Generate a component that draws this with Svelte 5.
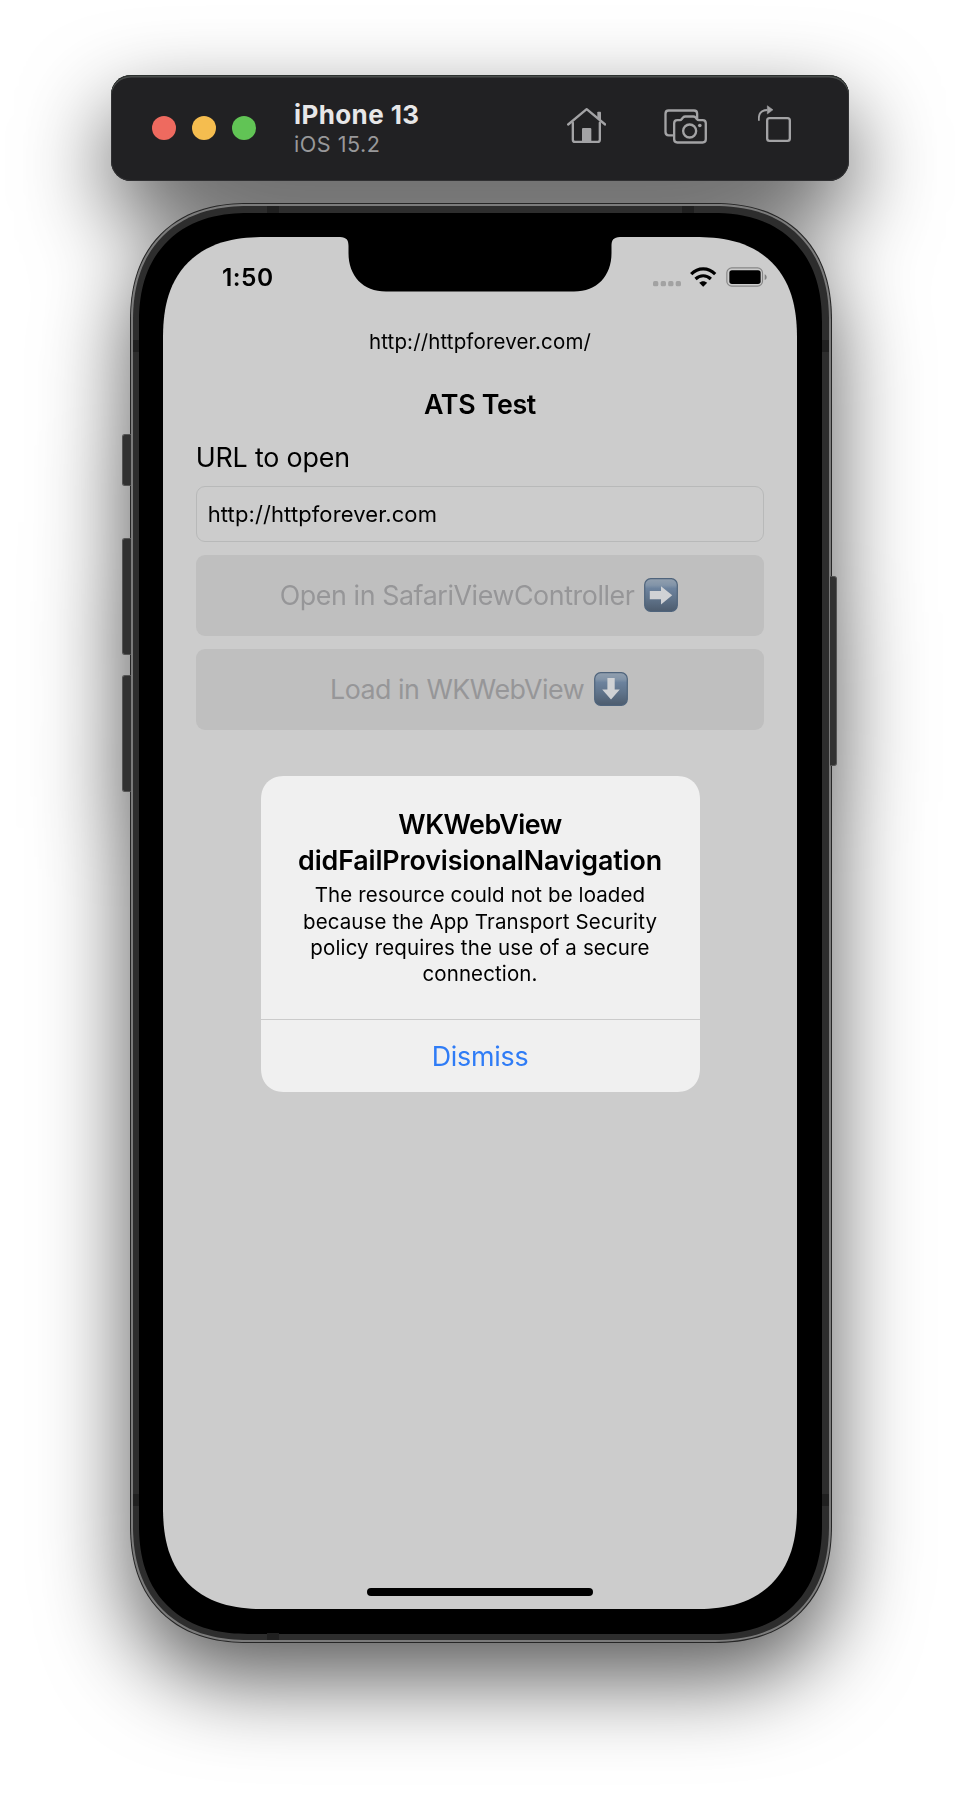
<script>
  const device = { name: 'iPhone 13', os: 'iOS 15.2' };
  const url = 'http://httpforever.com';
</script>

<div class="stage">
  <header class="toolbar">
    <div class="lights"><i class="red"></i><i class="yellow"></i><i class="green"></i></div>
    <div class="device">
      <div class="name">{device.name}</div>
      <div class="os">{device.os}</div>
    </div>
    <div class="tools">
      <svg width="39.5" height="40" viewBox="198 135 118.5 120" fill="none" stroke="#a3a3a5" stroke-width="7" stroke-linecap="round" stroke-linejoin="round">
        <path d="M201.500 193.500 257 147.500 312.500 193.500" />
        <path d="M215.500 188V239Q215.500 245.500 222 245.500H290Q296.500 245.500 296.500 239V188" />
        <path d="M289 157Q289 155 291 155H298Q300 155 300 157V182L289 173Z" fill="#a3a3a5" stroke="none" />
        <path d="M243 207Q243 204 246 204H268Q271 204 271 207V246H243Z" fill="#a3a3a5" stroke="none" />
      </svg>
      <svg class="camera" width="43.3" height="40" viewBox="491 135 130 120" fill="none" stroke="#a3a3a5" stroke-width="7" stroke-linecap="butt" stroke-linejoin="round">
        <path d="M519 226H505Q495.500 226 495.500 216V161Q495.500 151.500 505 151.500H581Q590.500 151.500 590.500 161V176" />
        <path d="M531 180.500H539Q542 180.500 544 177.500L548 172.500Q551 169.500 555 169.500H579Q583 169.500 586 172.500L590 177.500Q592 180.500 596 180.500H607Q616.500 180.500 616.500 190V238Q616.500 247.500 607 247.500H531Q521.500 247.500 521.500 238V190Q521.500 180.500 531 180.500Z" />
        <circle cx="568" cy="213" r="19.500" />
        <circle cx="598.500" cy="196.500" r="5.500" fill="#a3a3a5" stroke="none" />
      </svg>
      <svg class="rotate" width="33.5" height="40" viewBox="774 135 100.500 120" fill="none" stroke="#a3a3a5" stroke-width="7" stroke-linejoin="round">
        <rect x="801.500" y="174.500" width="68" height="68" rx="7" />
        <path d="M776.500 182V175C776.500 158 786 150 802 150" stroke-width="5.500" />
        <path d="M802 137 819 149.500 802 162Z" fill="#a3a3a5" stroke-width="1.500" />
      </svg>
    </div>
  </header>

  <div class="phone">
    <span class="key mute"></span>
    <span class="key up"></span>
    <span class="key down"></span>
    <span class="key power"></span>
    <div class="band">
      <b class="seam t l"></b><b class="seam t r"></b>
      <b class="seam lt"></b><b class="seam rt"></b>
      <b class="seam lb"></b><b class="seam rb"></b>
      <b class="seam bt"></b>
      <div class="bezel">
        <main class="screen">
          <svg class="notch" width="280" height="55" viewBox="0 0 280 55">
            <path d="M0 0C6.500 .3 8.500 3 8.500 9V16C8.500 39 23 54.500 46 54.500H234C257 54.500 271.500 39 271.500 16V9C271.500 3 273.500 .3 280 0Z" fill="#000" />
          </svg>
          <div class="status">
            <span class="time">1:50</span>
            <div class="signals">
              <svg width="28" height="20" viewBox="283 231 84 60" fill="#a2a2a2">
                <rect x="283" y="273" width="16" height="16" rx="5" />
                <rect x="306" y="273" width="16" height="16" rx="5" />
                <rect x="328.500" y="273" width="16" height="16" rx="5" />
                <rect x="351" y="273" width="16" height="16" rx="5" />
              </svg>
              <svg width="26.400" height="20" viewBox="393 230 79 60" fill="none" stroke="#000" stroke-width="9.500">
                <path d="M396.500 251.500C417 230.500 448 230.500 468.500 251.500" />
                <path d="M409.500 266C423 253 442 253 455.500 266" />
                <path d="M420.500 277.500C427.500 271 437.500 271 444.500 277.500L433.500 288.500Q432.500 289.500 431.500 288.500Z" fill="#000" stroke="none" />
              </svg>
              <svg width="41" height="20" viewBox="499 231 123 60">
                <rect x="501.500" y="233.500" width="107" height="55" rx="15" fill="none" stroke="#858585" stroke-width="3.500" />
                <rect x="509" y="240.500" width="94" height="41.500" rx="8" />
                <path d="M615 253C623 256 623 267 615 270Z" fill="#808080" />
              </svg>
            </div>
          </div>

          <p class="current">{url}/</p>
          <h1>ATS Test</h1>
          <label for="target">URL to open</label>
          <div class="field" id="target">{url}</div>

          <button class="action">
            <span class="open">Open in SafariViewController</span>
            <svg width="34" height="34" viewBox="0 0 34 34">
              <defs>
                <linearGradient id="tile" x1="0" y1="0" x2="0" y2="1">
                  <stop offset="0" stop-color="#92a0af" />
                  <stop offset=".2" stop-color="#8294a8" />
                  <stop offset=".3" stop-color="#6c829d" />
                  <stop offset=".6" stop-color="#60748b" />
                  <stop offset="1" stop-color="#4d5c6e" />
                </linearGradient>
              </defs>
              <rect x=".7" y=".7" width="32.600" height="32.600" rx="6" fill="url(#tile)" stroke="#4f647c" stroke-width="1.200" />
              <path d="M5.800 13H17V8.200L28.200 17.200 17 26.500V21.300H5.800Z" fill="#d0d2d5" />
            </svg>
          </button>
          <button class="action second">
            <span class="load">Load in WKWebView</span>
            <svg width="34" height="34" viewBox="0 0 34 34">
              <rect x=".7" y=".7" width="32.600" height="32.600" rx="6" fill="url(#tile)" stroke="#4f647c" stroke-width="1.200" />
              <path d="M13.400 6V17.500H8.200L17 27.500 25.800 17.500H20.700V6Z" fill="#d0d2d5" />
            </svg>
          </button>

          <div class="alert" role="alertdialog">
            <div class="message">
              <h2><span class="view">WKWebView</span><br />didFailProvisionalNavigation</h2>
              <p>The resource could not be loaded<br />because the App Transport Security<br /><span class="policy">policy requires the use of a secure</span><br />connection.</p>
            </div>
            <button class="dismiss">Dismiss</button>
          </div>
          <div class="home"></div>
        </main>
      </div>
    </div>
  </div>
</div>

<style>
  :global(body) { background: #fff; }
  .stage {
    box-sizing: border-box;
    width: 960px;
    height: 1794px;
    padding-top: 75px;
    display: flex;
    flex-direction: column;
    align-items: center;
    font-family: Inter, "Liberation Sans", sans-serif;
    filter: drop-shadow(0 36px 44px rgba(0, 0, 0, .65));
    overflow: hidden;
  }
  p, h1, h2 { margin: 0; }
  button { border: 0; font: inherit; padding: 0; }
  svg { display: block; flex: none; }

  .toolbar {
    box-sizing: border-box;
    width: 738px;
    height: 106px;
    flex: none;
    display: flex;
    align-items: center;
    padding: 0 57.5px 0 41px;
    border-radius: 20px;
    background: #212123;
    box-shadow: inset 0 1px 0 #2b302e, inset 0 2.500px 0 #4a4d4c, inset 0 0 0 1px #303032;
  }
  .lights { display: flex; gap: 16px; }
  .lights i { width: 24px; height: 24px; border-radius: 50%; }
  .red { background: #ee6a5f; }
  .yellow { background: #f5bd4f; }
  .green { background: #61c455; }
  .device { margin-left: 38px; }
  .name { font-size: 26px; line-height: 30px; font-weight: 700; letter-spacing: .4px; color: #e7e7e8; }
  .os { margin-top: 2.600px; font-size: 21.600px; line-height: 24px; letter-spacing: .5px; color: #98989a; }
  .tools { margin-left: auto; display: flex; margin-top: -6px; }
  .camera { margin-left: 57.700px; }
  .rotate { margin-left: 51px; }

  .phone {
    position: relative;
    box-sizing: border-box;
    width: 702px;
    height: 1440px;
    flex: none;
    margin: 22px 0 0 2px;
    border: 1px solid #262626;
    padding: 2px;
    background: #7b7b7b;
    border-radius: 118px;
    corner-shape: superellipse(1.2);
  }
  .band {
    position: relative;
    box-sizing: border-box;
    height: 100%;
    padding: 7px 7px 6.500px 6px;
    background: #2d2d2d;
    border-radius: 115px;
    corner-shape: superellipse(1.2);
  }
  .bezel {
    box-sizing: border-box;
    height: 100%;
    padding: 24px 25px 24.500px 24px;
    background: #000;
    border-radius: 109px;
    corner-shape: superellipse(1.2);
  }
  .seam { position: absolute; background: #202020; width: 12px; height: 7px; }
  .t { top: 0; }
  .l { left: 134px; }
  .r { left: 549px; }
  .bt { bottom: 0; left: 134px; }
  .lt, .lb { left: 0; width: 6px; height: 12px; }
  .rt, .rb { right: 0; width: 7px; height: 12px; }
  .lt, .rt { top: 134px; }
  .lb, .rb { bottom: 134px; }
  .key {
    position: absolute;
    box-sizing: border-box;
    left: -9px;
    width: 9px;
    background: #313131;
    border: 1.500px solid #555;
    border-right: 0;
    border-radius: 3px 0 0 3px;
  }
  .mute { top: 230px; height: 52px; }
  .up { top: 334px; height: 117px; }
  .down { top: 471px; height: 117px; }
  .power {
    left: auto;
    right: -6px;
    width: 7px;
    top: 372px;
    height: 190px;
    border: 1.500px solid #555;
    border-left: 0;
    border-radius: 0 3px 3px 0;
  }

  .screen {
    position: relative;
    box-sizing: border-box;
    height: 100%;
    padding: 0 32.700px;
    display: flex;
    flex-direction: column;
    background: #ccc;
    color: #000;
    border-radius: 102px;
    corner-shape: superellipse(1.28);
  }
  .notch { position: absolute; top: 0; left: 177px; }
  .status {
    height: 80px;
    margin: 0 -2.300px 0 26.200px;
    display: flex;
    align-items: center;
    justify-content: space-between;
  }
  .time { font-size: 24.500px; line-height: 30px; font-weight: 600; letter-spacing: .5px; }
  .signals { display: flex; gap: 9px; }
  .current {
    margin-top: 12.300px;
    font-size: 20.500px;
    line-height: 26px;
    letter-spacing: .14px;
    text-align: center;
  }
  h1 {
    margin-top: 32.200px;
    font-size: 26.800px;
    line-height: 34px;
    font-weight: 600;
    letter-spacing: -.33px;
    text-align: center;
  }
  label { margin: 18.500px 0 0; font-size: 26.800px; line-height: 34px; letter-spacing: -.15px; }
  .field {
    box-sizing: border-box;
    height: 56px;
    margin-top: 12px;
    padding-left: 11px;
    border: 1px solid #b8b9b9;
    border-radius: 9px;
    font-size: 22px;
    line-height: 54px;
    letter-spacing: .11px;
  }
  .action {
    box-sizing: border-box;
    height: 81px;
    flex: none;
    margin-top: 13px;
    padding-right: 2px;
    display: flex;
    align-items: center;
    justify-content: center;
    gap: 9.800px;
    border-radius: 9px;
    background: #bfbfbf;
    color: #969698;
    font-size: 26.800px;
    line-height: 34px;
  }
  .second { margin-top: 13px; padding-bottom: 1px; }
  .open { letter-spacing: -.41px; }
  .load { letter-spacing: -.5px; }

  .alert {
    position: absolute;
    top: 538.500px;
    left: 97.500px;
    width: 439px;
    height: 316px;
    display: flex;
    flex-direction: column;
    border-radius: 24px;
    corner-shape: superellipse(1.2);
    background: #f0f0f0;
    text-align: center;
    white-space: nowrap;
  }
  .message { box-sizing: border-box; height: 243.500px; padding-top: 31.700px; }
  h2 { font-size: 26.800px; line-height: 35.700px; font-weight: 600; letter-spacing: -.12px; }
  .view { letter-spacing: -.48px; }
  .message p { margin-top: 3.900px; font-size: 20.500px; line-height: 26.100px; letter-spacing: .11px; }
  .policy { letter-spacing: .145px; }
  .dismiss {
    flex: 1;
    border-top: 1px solid #cbcbcb;
    background: none;
    color: #2f7cf6;
    font-size: 26.800px;
    letter-spacing: -.23px;
  }
  .home {
    width: 226px;
    height: 8px;
    margin: auto auto 13px;
    border-radius: 4px;
    background: #000;
  }
</style>
